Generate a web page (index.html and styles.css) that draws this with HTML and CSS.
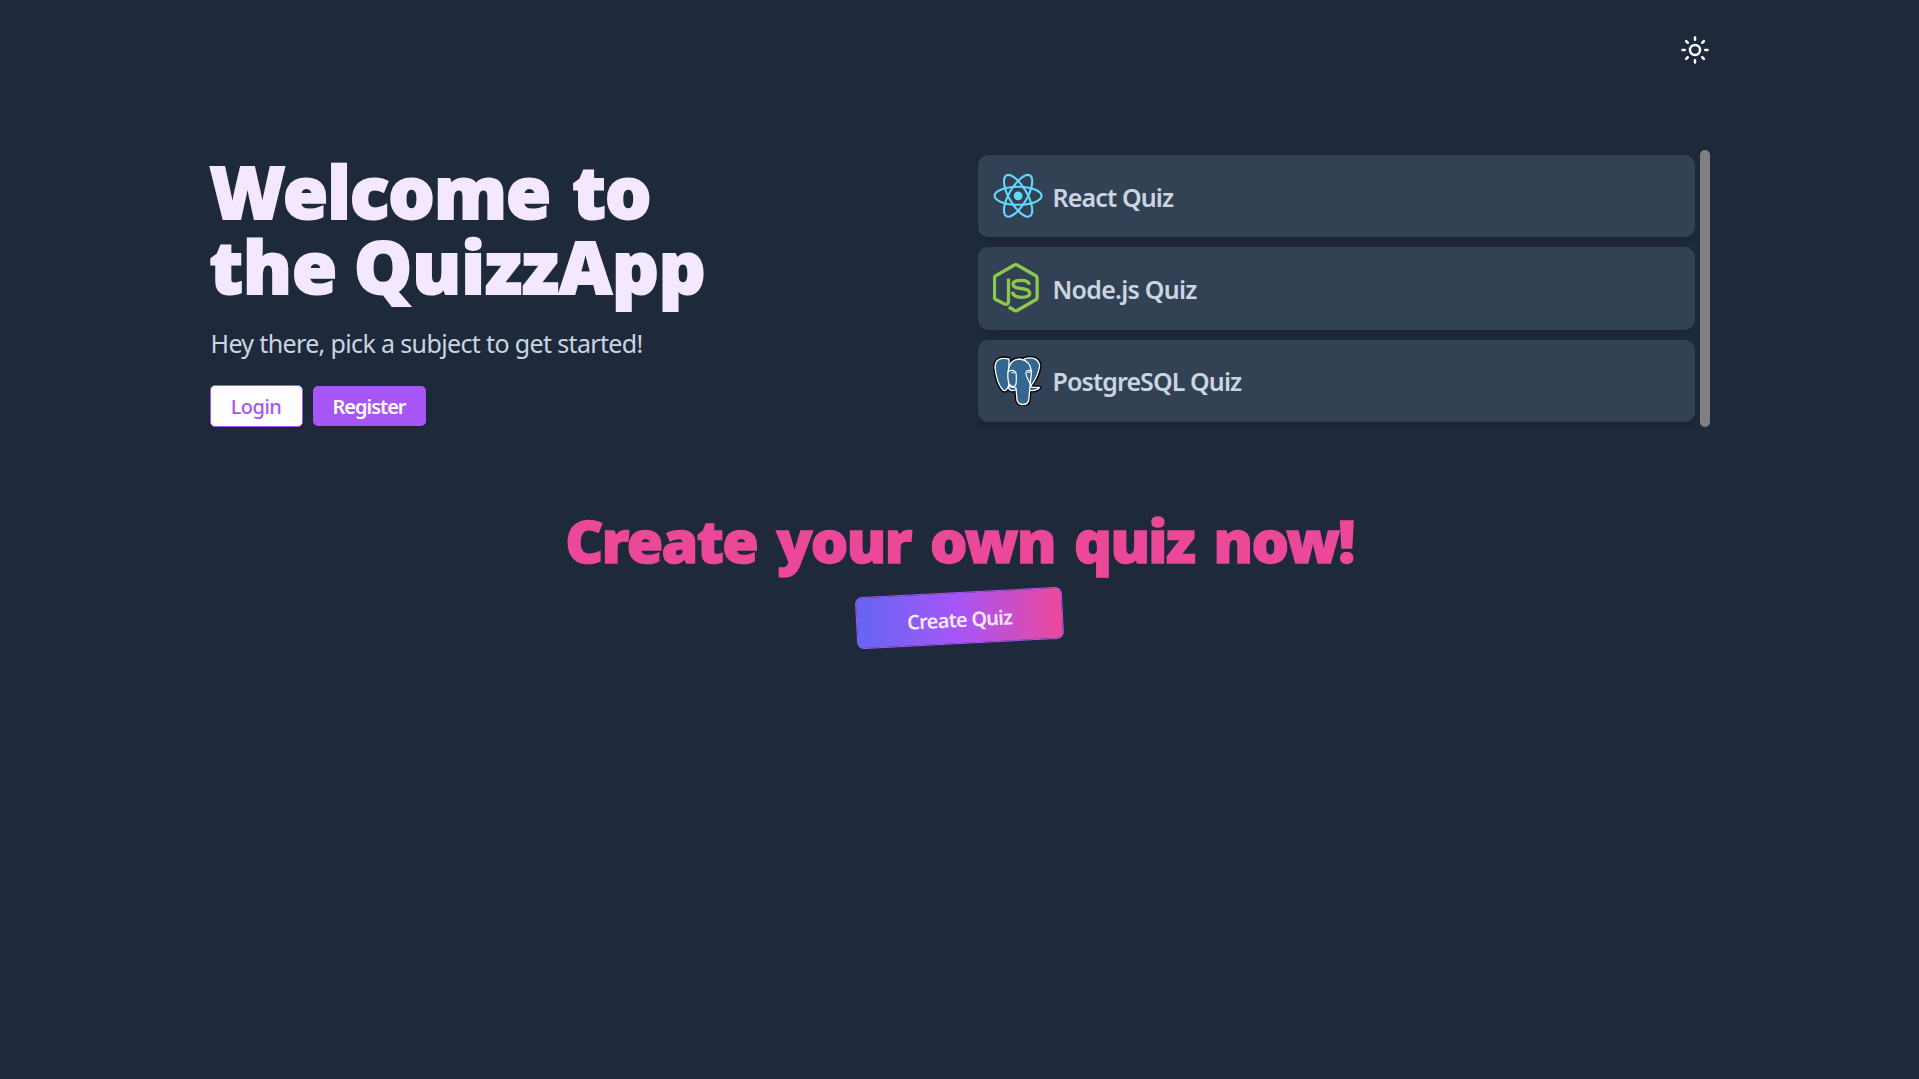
FILE: index.html
```html
<!DOCTYPE html>
<html lang="en">
<head>
<meta charset="utf-8">
<title>QuizzApp</title>
<link rel="stylesheet" href="styles.css">
</head>
<body>
<div class="container">
  <header class="topbar">
    <button class="theme-toggle" aria-label="Toggle theme">
      <svg width="30" height="30" viewBox="0 0 24 24" fill="none" stroke="#fff" stroke-width="2" stroke-linecap="round"><circle cx="12" cy="12" r="4"/><path d="M12 2v1.800M12 20.200v1.800M2 12h1.800M20.200 12h1.800M4.900 4.900l1.300 1.300M17.800 17.800l1.300 1.300M4.900 19.100l1.300-1.300M17.800 6.200l1.300-1.300"/></svg>
    </button>
  </header>
  <main class="hero">
    <section class="intro">
      <h1 class="title"><span class="line-one">Welcome to</span><span class="line-two">the QuizzApp</span></h1>
      <p class="lead">Hey there, pick a subject to get started!</p>
      <div class="actions">
        <button class="btn btn-login">Login</button>
        <button class="btn btn-register">Register</button>
      </div>
    </section>
    <section class="subjects">
      <ul class="quiz-list">
        <li class="quiz-card">
          <svg class="logo" viewBox="0 0 50 50"><g fill="none" stroke="#61dafb" stroke-width="2.1" transform="translate(25.100 24.800)"><circle r="4.400" fill="#61dafb" stroke="none"/><ellipse rx="23.500" ry="9"/><ellipse rx="23.500" ry="9" transform="rotate(60)"/><ellipse rx="23.500" ry="9" transform="rotate(120)"/></g></svg>
          <span class="quiz-name react">React Quiz</span>
        </li>
        <li class="quiz-card">
          <svg class="logo" viewBox="0 0 50 50"><g fill="none" stroke="#8cc84b" stroke-width="3.3" stroke-linejoin="round"><path d="M15.500 15.500v22.500q0 4.500-4.500 2.800L2.700 36.500Q1.500 36 1.500 34.500V15Q1.500 13.500 2.700 12.800L21.500 2Q22.800 1.300 24.100 2L42.800 12.800Q44.100 13.500 44.100 15V34.500Q44.100 36 42.800 36.800L24.100 47.500Q22.800 48.200 21.500 47.500L15.800 44"/><path d="M36.300 21.800Q35.800 17.300 28 17.300T20 21.300Q20 24.800 28 25.500T36.800 30Q36.800 34.300 28.500 34.300T19.500 28.800"/></g></svg>
          <span class="quiz-name node">Node.js Quiz</span>
        </li>
        <li class="quiz-card">
          <svg class="logo" viewBox="0 0 50 50">
            <defs>
              <g id="elephant">
                <path d="M16 3C8 1 2 3 2 12C3 20 6 30 10 34C12.500 36 14.500 33 16 29Z"/>
                <path d="M31 3C39 0 47 3 46.500 11C45 20 41 26 37 31L34 28Z"/>
                <path d="M15.500 31C15.500 34.500 20 36 24 33L22 28Z"/>
                <path d="M36 30C40 32.500 44 31 46.500 31.500C44 35 38 35 35 34Z"/>
                <path d="M16 28C14.500 23 14.500 18 15.500 13C17 6 21 3 27 3C34 4 38 9 38.500 16L37 30L35.800 44C34.500 50 25.500 50 24 44L23 32C20 31 17.500 30 16 28Z"/>
              </g>
            </defs>
            <use href="#elephant" stroke="#000" stroke-width="4" stroke-linejoin="round"/>
            <use href="#elephant" fill="#336791" stroke="#fff" stroke-width="1.300" stroke-linejoin="round"/>
            <path d="M15 16C17 13.500 22 14 23 17C23.500 20 23.500 23 23 28C22 31 19 32 17 30M38.500 15C35 13.500 32.500 15 33 18C33.500 22 36 25 38 29M19 16.500l2 .5M35 16.500l2-.3" fill="none" stroke="#fff" stroke-width="1.200" stroke-linecap="round"/>
          </svg>
          <span class="quiz-name postgres">PostgreSQL Quiz</span>
        </li>
      </ul>
      <div class="scroll-thumb"></div>
    </section>
  </main>
  <section class="create">
    <h2 class="create-title">Create your own quiz now!</h2>
    <button class="btn-create">Create Quiz</button>
  </section>
</div>
</body>
</html>
```
FILE: styles.css
```css
* { box-sizing: border-box; }
body { margin: 0; min-height: 100vh; background: #1e293b; font-family: "Noto Sans", "Open Sans", sans-serif; }
h1, h2, p, ul { margin: 0; padding: 0; }
button { font: inherit; }
.container { width: 1500px; margin: 0 auto; }
.topbar { height: 150px; display: flex; justify-content: flex-end; align-items: flex-start; padding-top: 35px; }
.theme-toggle { display: flex; padding: 0; border: 0; background: none; }
.hero { display: flex; justify-content: space-between; height: 277px; }
.title { display: flex; flex-direction: column; padding-top: 3px; font-size: 73px; line-height: 75px; font-weight: 900; color: #f3e8ff; white-space: nowrap; -webkit-text-stroke: 2px #f3e8ff; }
.line-one { letter-spacing: -0.9px; word-spacing: 4px; }
.line-two { letter-spacing: 0; word-spacing: -2px; }
.lead { margin-top: 23px; padding-left: 1px; font-size: 25px; line-height: 35px; letter-spacing: -0.64px; color: #cbd5e1; }
.actions { display: flex; align-items: center; gap: 10px; margin-top: 24px; }
.btn { display: flex; align-items: center; justify-content: center; padding: 1px 0 0; border-radius: 5px; font-size: 20px; box-shadow: 0 1px 3px rgba(0,0,0,.15); }
.btn-login { width: 93px; height: 42px; border: 1px solid #a855f7; background: #fff; color: #a855f7; font-weight: 500; letter-spacing: -0.5px; }
.btn-register { width: 113px; height: 40px; border: 0; background: #a855f7; color: #fff; font-weight: 600; letter-spacing: -1px; }
.subjects { display: flex; gap: 5px; width: 732px; }
.quiz-list { flex: 1; display: flex; flex-direction: column; gap: 10px; padding: 5px 0; list-style: none; }
.quiz-card { flex: 1; display: flex; align-items: center; gap: 10px; padding: 0 15px; border-radius: 10px; background: #334155; box-shadow: 0 4px 6px -1px rgba(0,0,0,.12); }
.logo { width: 50px; height: 50px; flex: none; }
.quiz-name { padding-top: 2px; font-size: 25px; line-height: 35px; font-weight: 600; color: #cbd5e1; }
.react { letter-spacing: -0.85px; }
.node { letter-spacing: -0.75px; }
.postgres { letter-spacing: -0.9px; }
.scroll-thumb { width: 10px; border-radius: 5px; background: #808080; }
.create { display: flex; flex-direction: column; align-items: center; padding-top: 83px; }
.create-title { font-size: 59px; line-height: 60px; font-weight: 900; letter-spacing: -1.6px; word-spacing: 5.5px; color: #ec4899; white-space: nowrap; -webkit-text-stroke: 1.5px #ec4899; }
.btn-create { width: 207px; height: 52px; margin-top: 22px; padding: 2px 0 0; border: 1px solid #a855f7; border-radius: 7px; background: linear-gradient(to right, #6366f1, #a855f7, #ec4899) border-box; color: #f3e8ff; font-size: 20px; font-weight: 600; letter-spacing: -0.75px; transform: rotate(-3deg); }
```
